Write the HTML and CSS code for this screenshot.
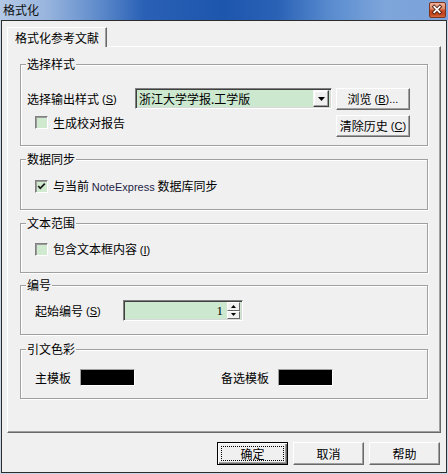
FILE: index.html
```html
<!DOCTYPE html>
<html lang="zh-CN">
<head>
<meta charset="utf-8">
<title>格式化</title>
<link rel="stylesheet" href="styles.css">
</head>
<body>
<div class="window">
  <div class="titlebar">
    <span class="title">格式化</span>
    <span class="close">
      <svg width="17" height="16" viewBox="0 0 17 16">
        <path d="M5.5 4.5 L11.5 10.5 M11.5 4.5 L5.5 10.5" stroke="#4a1c10" stroke-width="3.6" stroke-linecap="square" fill="none"/>
        <path d="M5.5 4.5 L11.5 10.5 M11.5 4.5 L5.5 10.5" stroke="#fff" stroke-width="1.8" stroke-linecap="square" fill="none"/>
      </svg>
    </span>
  </div>
  <div class="client">
    <div class="tabs"><div class="tab">格式化参考文献</div></div>
    <div class="panel">
      <div class="group g1">
        <div class="gtitle">选择样式</div>
        <div class="row r1">
          <span class="label lw1">选择输出样式 <span class="lat">(<u>S</u>)</span></span>
          <div class="combo">
            <span class="ctext">浙江大学学报.工学版</span>
            <span class="ddbtn"><svg width="7" height="4" viewBox="0 0 7 4"><path d="M0 0 H7 L3.5 4 Z" fill="#000"/></svg></span>
          </div>
          <div class="btn side">浏览 <span class="lat">(<u>B</u>)...</span></div>
        </div>
        <div class="row r2">
          <div class="check"><span class="box"></span><span>生成校对报告</span></div>
          <div class="btn side push">清除历史 <span class="lat">(<u>C</u>)</span></div>
        </div>
      </div>

      <div class="group g2">
        <div class="gtitle">数据同步</div>
        <div class="row r3">
          <div class="check"><span class="box"><svg width="11" height="11" viewBox="0 0 11 11"><path d="M2.2 5 L4.3 7.3 L8.8 2.6" stroke="#1c1c1c" stroke-width="1.8" fill="none"/></svg></span><span>与当前 <span class="lat ne">NoteExpress</span> 数据库同步</span></div>
        </div>
      </div>

      <div class="group g3">
        <div class="gtitle">文本范围</div>
        <div class="row r4">
          <div class="check"><span class="box"></span><span>包含文本框内容 <span class="lat">(<u>I</u>)</span></span></div>
        </div>
      </div>

      <div class="group g4">
        <div class="gtitle">编号</div>
        <div class="row r5">
          <span class="label lw2">起始编号 <span class="lat">(<u>S</u>)</span></span>
          <div class="spin">
            <span class="snum">1</span>
            <span class="sbtns">
              <span class="sbtn"><svg width="5" height="3" viewBox="0 0 5 3"><path d="M2.5 0 L5 3 H0 Z" fill="#000"/></svg></span>
              <span class="sbtn"><svg width="5" height="3" viewBox="0 0 5 3"><path d="M0 0 H5 L2.5 3 Z" fill="#000"/></svg></span>
            </span>
          </div>
        </div>
      </div>

      <div class="group g5">
        <div class="gtitle">引文色彩</div>
        <div class="row r6">
          <div class="pair"><span>主模板</span><span class="swatch"></span></div>
          <div class="pair second"><span>备选模板</span><span class="swatch"></span></div>
        </div>
      </div>
    </div>
    <div class="actions">
      <div class="btn action default"><span class="focus">确定</span></div>
      <div class="btn action">取消</div>
      <div class="btn action">帮助</div>
    </div>
  </div>
</div>
</body>
</html>
```

FILE: styles.css
```css
* { box-sizing: border-box; }

body {
  margin: 0;
  background: #ffffff;
  font-family: "Noto Sans CJK SC", "Noto Sans", sans-serif;
  font-size: 12px;
  color: #000;
}

.window {
  width: 448px;
  height: 474px;
  display: flex;
  flex-direction: column;
  background: #c9d6e8;
}

.titlebar {
  height: 20px;
  flex: none;
  display: flex;
  align-items: center;
  justify-content: space-between;
  padding-left: 3px;
  background: linear-gradient(90deg, #b3c8e6 0%, #9ab6de 10%, #5f8bcb 22%, #2a61b6 32%, #1d56ad 50%, #2a62b6 62%, #5a8ccf 74%, #7fa6db 86%, #7ba2d9 100%);
}

.title {
  line-height: 14px;
  font-size: 12px;
  color: #101010;
}

.close {
  width: 17px;
  height: 16px;
  margin-right: 2px;
  margin-top: -1px;
  border: 1px solid #7a3420;
  border-radius: 2px;
  background: linear-gradient(180deg, #eeb39c 0%, #df8a68 40%, #c94a22 55%, #c2441c 80%, #d66a3c 100%);
  display: flex;
}
.close svg { margin: -1px 0 0 -1px; }

.client {
  flex: 1;
  margin: 0 1px 1px;
  border: 1px solid #2c2c2c;
  background: #f0f0f0;
  padding: 6px 5px 0;
  display: flex;
  flex-direction: column;
}

.tabs {
  display: flex;
  position: relative;
  z-index: 1;
  margin-bottom: -1px;
}

.tab {
  height: 20px;
  padding: 3px 7px 0 7px;
  line-height: 14px;
  background: #f0f0f0;
  border-top: 1px solid #ffffff;
  border-left: 1px solid #ffffff;
  border-right: 1px solid #696969;
  box-shadow: inset -1px 0 0 #a0a0a0;
}

.panel {
  height: 387px;
  border-top: 1px solid #ffffff;
  border-left: 1px solid #ffffff;
  border-right: 1px solid #696969;
  border-bottom: 1px solid #696969;
  box-shadow: inset -1px -1px 0 #a0a0a0;
  padding-top: 17px;
}

.group {
  margin: 0 12px;
  border: 1px solid #a0a0a0;
  box-shadow: 1px 1px 0 #ffffff, inset 1px 1px 0 #ffffff;
}
.g1 { height: 82px; }
.g2 { height: 51px; margin-top: 13px; }
.g3 { height: 50px; margin-top: 13px; }
.g4 { height: 50px; margin-top: 12px; }
.g5 { height: 50px; margin-top: 14px; }

.gtitle {
  width: fit-content;
  margin: -8px 0 0 5px;
  padding: 0 1px;
  line-height: 14px;
  background: #f0f0f0;
}

.row {
  display: flex;
  align-items: flex-start;
  line-height: 14px;
}

.lat {
  font-family: "Liberation Sans", Arial, sans-serif;
  font-size: 11px;
}
.ne { color: #1e1e46; }

.label { display: flex; align-items: center; gap: 3px; white-space: nowrap; }

.r1 { margin-top: 17px; padding: 0 17px 0 6px; }
.lw1 { width: 108px; height: 21px; }

.combo {
  width: 197px;
  height: 21px;
  display: flex;
  align-items: center;
  justify-content: space-between;
  background: #cce8cf;
  border-top: 1px solid #808080;
  border-left: 1px solid #808080;
  border-right: 1px solid #ffffff;
  border-bottom: 1px solid #ffffff;
  box-shadow: inset 1px 1px 0 #404040, inset -1px -1px 0 #d8d8d8;
  padding: 0 2px 0 3px;
}

.ddbtn {
  width: 16px;
  height: 17px;
  display: flex;
  align-items: center;
  justify-content: center;
  background: #f0f0f0;
  border-top: 1px solid #f8f8f8;
  border-left: 1px solid #f8f8f8;
  border-right: 1px solid #404040;
  border-bottom: 1px solid #404040;
  box-shadow: inset -1px -1px 0 #a0a0a0, inset 1px 1px 0 #ffffff;
}

.btn {
  display: flex;
  align-items: center;
  justify-content: center;
  gap: 3px;
  background: #f0f0f0;
  border-top: 1px solid #ffffff;
  border-left: 1px solid #ffffff;
  border-right: 1px solid #696969;
  border-bottom: 1px solid #696969;
  box-shadow: inset -1px -1px 0 #a0a0a0;
  white-space: nowrap;
  line-height: 14px;
}

.side { width: 74px; height: 22px; margin-left: 4px; }
.push { margin-left: auto; }

.r2 { margin-top: 5px; padding: 0 17px 0 14px; }
.r2 .check { margin-top: 1px; }

.check {
  display: flex;
  align-items: center;
  gap: 5px;
  height: 13px;
  white-space: nowrap;
}

.box {
  width: 13px;
  height: 13px;
  flex: none;
  background: #cfeacf;
  border-top: 1px solid #808080;
  border-left: 1px solid #808080;
  border-right: 1px solid #ffffff;
  border-bottom: 1px solid #ffffff;
  box-shadow: inset 1px 1px 0 #9a9a9a;
  display: flex;
}
.box svg { margin: 0; }

.r3 { margin-top: 14px; padding-left: 14px; }
.r4 { margin-top: 13px; padding-left: 14px; }

.r5 { margin-top: 8px; padding-left: 14px; align-items: center; }
.lw2 { width: 88px; }

.spin {
  width: 120px;
  height: 21px;
  display: flex;
  align-items: center;
  justify-content: flex-end;
  background: #cce8cf;
  border-top: 1px solid #808080;
  border-left: 1px solid #808080;
  border-right: 1px solid #ffffff;
  border-bottom: 1px solid #ffffff;
  box-shadow: inset 1px 1px 0 #404040, inset -1px -1px 0 #d8d8d8;
  padding-right: 2px;
}

.snum {
  font-family: "Liberation Serif", "Times New Roman", serif;
  font-size: 13px;
  margin-right: 4px;
}

.sbtns {
  display: flex;
  flex-direction: column;
  width: 13px;
  height: 17px;
}

.sbtn {
  flex: 1;
  display: flex;
  align-items: center;
  justify-content: center;
  background: #f0f0f0;
  border-top: 1px solid #ffffff;
  border-left: 1px solid #ffffff;
  border-right: 1px solid #696969;
  border-bottom: 1px solid #696969;
}

.r6 { margin-top: 13px; padding-left: 14px; align-items: center; }

.pair {
  display: flex;
  align-items: center;
  gap: 9px;
  white-space: nowrap;
}
.second { margin-left: 86px; }

.swatch {
  width: 55px;
  height: 17px;
  background: #000;
  border-top: 1px solid #a0a0a0;
  border-left: 1px solid #a0a0a0;
  border-right: 1px solid #ffffff;
  border-bottom: 1px solid #ffffff;
}

.actions {
  margin-top: 9px;
  margin-right: 1px;
  display: flex;
  justify-content: flex-end;
  gap: 5px;
}

.action { width: 71px; height: 23px; }

.default {
  border: 1px solid #000;
  box-shadow: inset 1px 1px 0 #ffffff, inset -1px -1px 0 #696969, inset -2px -2px 0 #a0a0a0;
  padding: 3px;
}

.focus {
  flex: 1;
  align-self: stretch;
  display: flex;
  align-items: center;
  justify-content: center;
  border: 1px dotted #000;
}
```
